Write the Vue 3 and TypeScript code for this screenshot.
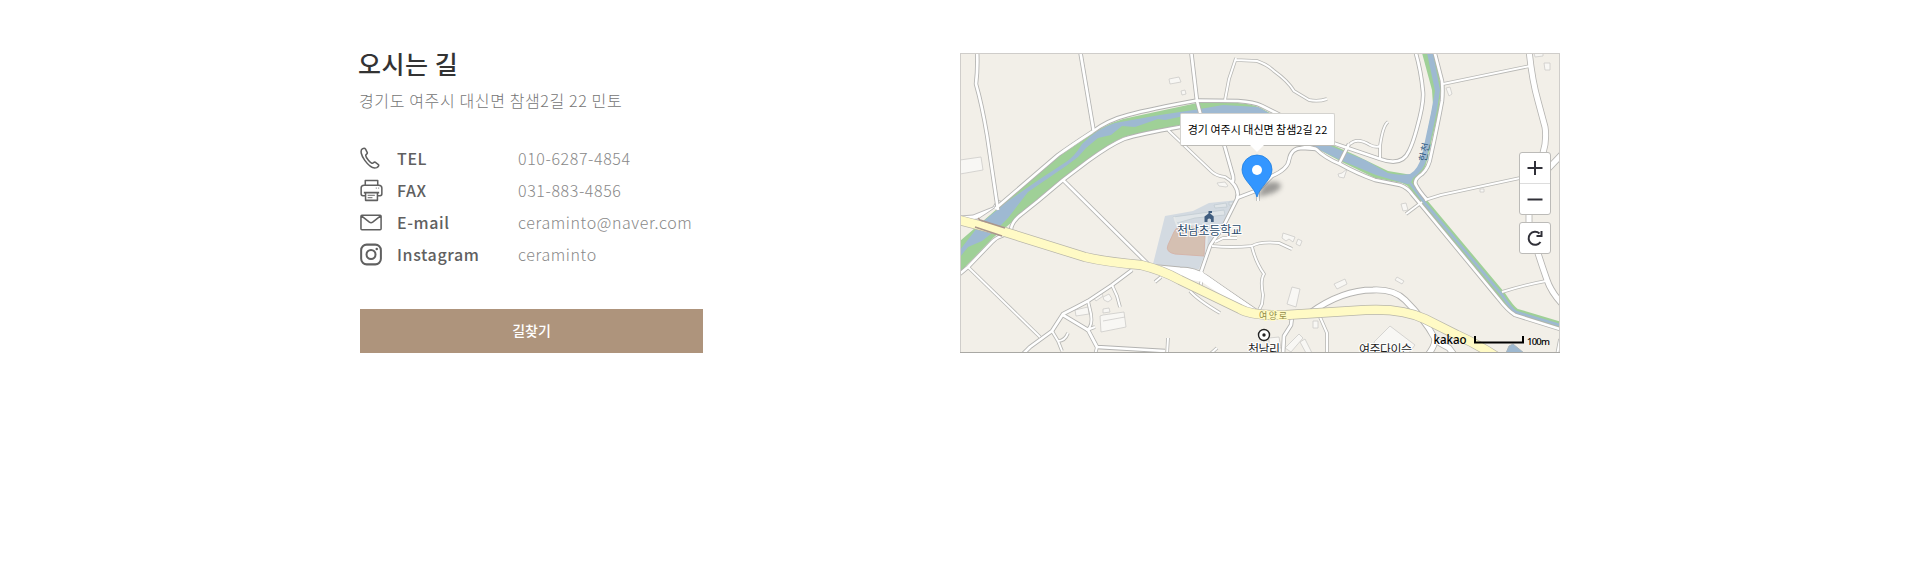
<script setup lang="ts">
interface Contact {
  icon: 'phone' | 'printer' | 'mail' | 'instagram'
  label: string
  value: string
}

const contacts: Contact[] = [
  { icon: 'phone', label: 'TEL', value: '010-6287-4854' },
  { icon: 'printer', label: 'FAX', value: '031-883-4856' },
  { icon: 'mail', label: 'E-mail', value: 'ceraminto@naver.com' },
  { icon: 'instagram', label: 'Instagram', value: 'ceraminto' },
]

const mediumRoads: string[] = [
  'M977 50 Q978 68 976 84 Q982 105 987 135 L998 210',
  'M1080 50 L1093.500 130',
  'M995 209 L1058 155 Q1072 145 1092 132 Q1108 120 1128 115 Q1150 109 1197 100.500 L1238 101 Q1254 102 1262 106 L1278 114 L1330 142 L1380 159 Q1402 167 1409 151 Q1413 143 1417 128 Q1424 103 1423 92 Q1421 70 1415 50',
  'M956 277 L968 267 L992 242 Q997 237 1004 235 M1011 229 Q1012 221 1023 213 L1038 201 L1063 180 L1088 161 Q1110 145 1124 139 Q1139 134 1180 127 L1240 124 L1302 145 L1316 149 Q1325 158 1340 164 Q1356 173 1375 180 L1400 185 Q1408 188 1412 194 L1422 206 L1498 298 Q1508 311 1515 315 L1563 330',
  'M1434 50 L1442 81 Q1443 91 1442 101 Q1438 123 1431 155 Q1429 168 1422 174 Q1413 180 1416 185 Q1419 191 1427 200',
  'M1191 50 L1197 101 L1201 116',
  'M1063 180 L1148 264',
  'M1238 197 L1222 229 Q1212 242 1210 246 L1201 272',
  'M1222 137 L1233 176 Q1234 184 1231 181 Q1240 190 1237 199',
  'M1237 198 L1258 190 L1272 176 Q1288 169 1289 160 Q1291 148 1302 148 L1316 149',
  'M1339 164 L1349 144',
  'M1022 355 L1030 347 L1052 331 L1063 314 Q1077 307 1088 301 L1112 285 L1132 270',
  'M1063 315 L1088 330 L1097 347 L1165 351',
  'M1292 317 L1291 325 L1284 336 L1283 355',
]

const minorRoads: string[] = [
  'M1443 84 L1530 66',
  'M1425 200 L1441 195 L1520 178',
  'M1502 292 Q1524 285 1546 281',
  'M1406 214 L1422 202',
  'M968 267 L1040 337',
  'M1168 130 L1211 171 Q1216 176 1225 177 L1232 182',
  'M1225 100 L1229 79 L1236 58 M1236 60 L1257 61 Q1268 65 1274 71 Q1288 81 1294 91 L1309 100 Q1318 102 1327 99',
  'M1258 190 V201',
  'M1212 246 Q1231 248 1252 246 Q1260 241 1279 243 L1292 249',
  'M1252 247 Q1256 263 1264 274 Q1260 280 1263 295 L1262 304 L1258 312',
  'M1215 242 L1223 238 H1237',
  'M1350 144 Q1357 137 1370 145 Q1376 148 1380 146 M1380 160 V146 Q1383 125 1388 122',
  'M1112 285 L1117 296 L1120 307',
  'M1088 301 L1091 314 Q1093 326 1087 330 L1095 327',
  'M1052 331 L1058 341 L1062 351 M1058 341 Q1065 341 1068 333',
  'M1097 347 L1095 355',
  'M1190 291 Q1198 300 1220 313 M1202 278 L1200 289',
  'M1320 317 L1327 333 L1327 355',
  'M1168 338 L1167 355',
  'M1217 348 L1208 356',
  'M1155 282 L1161 277',
  'M1560 339 L1557 355',
]

const wideRoads: string[] = [
  'M1529 50 Q1532 80 1538 101 L1545 127 Q1547 140 1543 153',
  'M1529 213 L1529 222 Q1535 246 1547 280 Q1551 292 1563 305',
  'M1563 153 L1547 170',
  'M1148 267 L1180 270 Q1195 270 1206 278 Q1220 288 1257 313',
  'M1310 313 Q1342 290 1373 290 Q1394 289 1405 300 Q1425 320 1434 337 Q1437 343 1428 355',
  'M1438 342 L1449 348 L1455 356',
]

const buildings: string[] = [
  'M960 160 L981 157 L983 170 L960 174Z',
  'M1169 79 L1179 77 L1181 82 L1170 84Z',
  'M1181 91 L1185 90 L1186 94 L1182 95Z',
  'M1534 53 L1543 53 L1543 56 L1535 57Z',
  'M1544 63 L1550 63 L1550 70 L1545 70Z',
  'M1446 88 L1450 87 L1452 94 L1449 96Z',
  'M1480 189 H1484 V192 H1480Z',
  'M1217 183 L1225 182 L1228 186 L1226 187 L1219 186Z',
  'M1338 174 L1342 173 L1347 169 L1344 178 L1339 177Z',
  'M1401 204 L1406 203 L1408 210 L1403 211Z',
  'M1397 277 L1404 281 L1402 284 L1395 280Z',
  'M1075 310 L1088 307 L1089 314 L1076 316Z',
  'M1093 297 L1101 292 L1103 296 L1096 301Z',
  'M1103 297 L1109 294 L1112 299 L1108 302 L1104 300Z',
  'M1103 309 L1109 308 L1110 312 L1103 313Z',
  'M1103 315 L1124 312 L1126 327 L1101 332 L1100 316 L1103 315Z',
  'M1103 321 L1125 317',
  'M1283 233 L1295 237 L1293 242 L1289 239 L1286 241 L1282 238Z',
  'M1298 239 L1302 241 L1300 246 L1296 244Z',
  'M1292 287 L1300 289 L1296 307 L1287 304Z',
  'M1334 284 L1345 279 L1347 284 L1337 289Z',
  'M1313 321 H1318 V328 H1313Z',
  'M1285 348 L1299 334 L1303 338 L1291 352Z',
  'M1300 342 L1305 339 L1312 353 L1306 353Z',
  'M1269 338 L1279 337 L1281 348 L1269 347Z',
  'M1390 326 L1415 345 L1408 354 L1378 354 L1374 342Z',
]
</script>

<template>
  <main class="directions">
    <section class="info">
      <h2>오시는 길</h2>
      <p class="address">경기도 여주시 대신면 참샘2길 22 민토</p>
      <ul class="contacts">
        <li v-for="contact in contacts" :key="contact.label">
          <svg class="icon" viewBox="0 0 24 24" aria-hidden="true">
            <path v-if="contact.icon === 'phone'" d="M2.400 2 C.1 3.500 1 8.500 5 14 C9 19.500 14 23 17.500 21.500 C19.200 20.700 20 19.400 19.200 18.300 L15.800 15.900 C14.700 15.300 14.200 16.400 13.300 17 C11.500 17.700 5.500 10.500 6 8.500 C6.500 7.400 8 7.200 7.600 5.800 L5.800 2.200 C5 1 3.500 1.300 2.400 2Z" />
            <g v-else-if="contact.icon === 'printer'">
              <path d="M5.500 6.300 V1.500 H18.500 V6.300 M5.500 17.500 H3 Q1.200 17.500 1.200 15.500 V9.500 Q1.200 6.500 4.300 6.500 H19.500 Q22.800 6.500 22.800 9.500 V15.500 Q22.800 17.500 21 17.500 H18.500 M4 14.200 H20 M5.800 14.200 V22.300 H18.200 V14.200" />
              <path class="fine" d="M8 17 H15.500 M8 19.500 H13 M16.500 9.500 H17.500 M19 9.500 H20" />
            </g>
            <path v-else-if="contact.icon === 'mail'" d="M2 4.500 H21 Q22 4.500 22 5.500 V18.500 Q22 19.500 21 19.500 H2 Q1 19.500 1 18.500 V5.500 Q1 4.500 2 4.500Z M1.500 5 L9.800 11.700 Q11.500 13 13.200 11.700 L21.500 5" />
            <g v-else class="strong">
              <rect x="1.200" y="1.700" width="20.600" height="20.600" rx="5.800" />
              <circle cx="11.500" cy="12" r="4.700" />
              <circle class="dot" cx="17.500" cy="6.300" r="1.300" />
            </g>
          </svg>
          <strong>{{ contact.label }}</strong>
          <span>{{ contact.value }}</span>
        </li>
      </ul>
      <button type="button">길찾기</button>
    </section>

    <section class="map">
      <svg class="terrain" viewBox="960 53 600 300" aria-label="지도">
        <defs>
          <filter id="pin-blur" x="-30%" y="-30%" width="160%" height="160%">
            <feGaussianBlur stdDeviation="2.500" />
          </filter>
        </defs>
        <rect x="960" y="53" width="600" height="300" fill="#f2efe8" />

        <path class="building" v-for="d in buildings" :key="d" :d="d" />

        <path fill="#d3dae1" d="M1165 216 L1193 211 L1209 203 L1238 200 L1222 229 L1210 245 L1203 270 L1153 264Z" />
        <path fill="#e0e5e8" stroke="#c2cbd2" stroke-width=".8" d="M1173 217 L1224 210 L1225 215 L1195 218 L1177 223Z M1214 205 L1226 203 L1227 207 L1215 208Z M1229 202 H1234 V205 H1229Z" />
        <path fill="#d5c0b2" stroke="#d5b5aa" d="M1174 232 Q1176 227 1180 227 L1192 227 L1205 234 L1204 256 L1175 254 Q1165 252 1168 245Z" />
        <path fill="none" stroke="#e5e8e8" stroke-width="2" d="M1174 217 L1177 225 L1194 224 L1207 234 L1206 254 L1200 269" />

        <path class="green" d="M960 241 L1005 202 L1058 157 L1092 134 Q1113 120 1132 117 L1197 103 L1238 103 Q1257 104 1268 112 L1328 143 L1355 155 L1388 171 L1412 175 Q1422 165 1425 145 L1433 105 L1432 90 L1422 53 L1435 53 L1441 87 L1439 110 L1427 160 Q1425 172 1416 178 L1412 188 L1402 183 L1375 178 L1340 161 L1316 148 L1255 125 L1180 125 L1127 136 Q1108 142 1063 179 L1035 202 L1017 218 L994 237 L960 272Z" />
        <path class="water" d="M960 250 L980 224 L1008 201 L1040 179 L1066 162 Q1075 156 1082 144 Q1098 128 1115 123 L1160 115 L1200 109 L1223 105 L1258 107 L1300 130 L1328 145 L1365 160 L1388 173 Q1400 176 1410 174 Q1418 170 1422 155 L1431 113 L1435 91 L1427 53 L1433 53 L1440 90 L1437 110 L1427 157 Q1424 171 1413 178 L1410 185 L1376 175 L1340 160 L1316 148 L1255 120 L1200 119 L1184 116 L1165 120 L1158 119 L1135 127 L1122 126 L1111 135 L1098 138 L1086 148 L1078 157 L1066 166 L1028 192 L1008 218 L997 229 L982 241 L968 247 L960 257Z" />
        <path class="stream-bank" d="M1410 183 L1424 202 L1502 295 Q1511 309 1516 312 L1563 326" />
        <path class="stream" d="M1410 183 L1424 202 L1502 295 Q1511 309 1516 312 L1563 326" />
        <path fill="#9db8d0" stroke="#a9b5bc" d="M1506 353 L1509 346 L1513 344 L1524 353Z" />
        <path fill="#fff" stroke="#aaa" stroke-width=".8" d="M960 216 L973 215 L993 207 L997 200 L1003 202 L987 213 L978 219 L960 221Z" />

        <path class="wide-case" v-for="d in wideRoads" :key="`c${d}`" :d="d" />
        <path class="medium-case" v-for="d in mediumRoads" :key="`c${d}`" :d="d" />
        <path class="minor-case" v-for="d in minorRoads" :key="`c${d}`" :d="d" />
        <path class="wide" v-for="d in wideRoads" :key="d" :d="d" />
        <path class="medium" v-for="d in mediumRoads" :key="d" :d="d" />
        <path class="minor" v-for="d in minorRoads" :key="d" :d="d" />
        <path fill="#fff" d="M1150 266 L1188 270 L1203 272 L1203 282 L1180 278Z M1202 272 L1258 311 L1250 314 L1199 280Z" />

        <path class="highway-case" d="M955 219 L1005 232 L1085 257 Q1106 262 1141 265 Q1162 270 1180 280 L1240 309 Q1252 316 1286 315 L1365 310 Q1402 308 1425 319 L1457 335 Q1479 345 1500 359" />
        <path class="highway" d="M955 219 L1005 232 L1085 257 Q1106 262 1141 265 Q1162 270 1180 280 L1240 309 Q1252 316 1286 315 L1365 310 Q1402 308 1425 319 L1457 335 Q1479 345 1500 359" />
        <path fill="none" stroke="#a9968b" stroke-width="1.500" d="M978 218 L980 220 L1005 228 M975 227 L1002 236" />

        <g class="place">
          <text x="1177" y="235" textLength="65" class="school">천남초등학교</text>
          <text x="1248" y="354" textLength="32">천남리</text>
          <text x="1359" y="354" textLength="53">여주다이슨</text>
          <text x="1259" y="319" textLength="28" class="road-name">여양로</text>
          <text transform="translate(1426 162) rotate(-78)" textLength="19" class="river-name">한천</text>
        </g>
        <path fill="#405d7f" d="M1204.500 222 V216.500 L1208.500 213.500 V211 H1212 V213 H1209.700 L1213.700 216.500 V222 H1211 V219.500 Q1209.200 217.500 1207.500 219.500 V222Z" />
        <circle cx="1264" cy="335" r="5.500" fill="#fff" stroke="#222" stroke-width="1.400" />
        <circle cx="1264" cy="335" r="1.700" fill="#222" />

        <path fill="#555" opacity=".55" filter="url(#pin-blur)" d="M1257 197 L1264 184 Q1276 179 1281 185 Q1281 193 1257 197Z" />
        <path fill="#3396ff" stroke="#207fe0" stroke-width=".8" d="M1257 197 C1254 186 1242 180 1242 169.500 A15 14.500 0 0 1 1272 169.500 C1272 180 1260 186 1257 197Z" />
        <circle cx="1257" cy="170" r="5" fill="#fff" />

        <text x="1433.500" y="343.500" textLength="33" lengthAdjust="spacingAndGlyphs" class="kakao">kakao</text>
        <path fill="none" stroke="#000" stroke-width="2" d="M1475 336 V342.500 H1523 V336" />
        <text x="1527" y="345" textLength="23" class="scale">100m</text>
        <rect x="960.500" y="53.500" width="599" height="299" fill="none" stroke="#cfcdca" />
        <path stroke="#a9a8a4" d="M960 352.500 H1560" />
      </svg>

      <div class="tooltip">경기 여주시 대신면 참샘2길 22</div>
      <div class="controls">
        <div class="zoom-controls">
          <button type="button" aria-label="확대"><svg viewBox="0 0 30 30"><path d="M7.500 15 H22.500 M15 8 V22" /></svg></button>
          <button type="button" aria-label="축소"><svg viewBox="0 0 30 30"><path d="M7.500 15.500 H22.500" /></svg></button>
        </div>
        <button type="button" class="refresh" aria-label="새로고침"><svg viewBox="0 0 30 30"><path d="M20.500 19 A6.500 6.500 0 1 1 19.500 10.500 M21.500 8 V13 H16.500" /></svg></button>
      </div>
    </section>
  </main>
</template>

<style>
body {
  margin: 0;
  background: #fff;
}
</style>

<style scoped>
.directions {
  box-sizing: border-box;
  width: 1920px;
  height: 563px;
  padding: 53px 360px 0;
  display: grid;
  grid-template-columns: 600px 600px;
  align-items: start;
  font-family: "Noto Sans CJK KR", sans-serif;
  color: #606060;
}
.info {
  height: 300px;
}
h2 {
  margin: -4px 0 0 -2px;
  height: 34px;
  line-height: 29px;
  font-size: 25px;
  font-weight: 500;
  letter-spacing: .5px;
  color: #333;
}
.address {
  margin: 5px 0 0 -1px;
  height: 25px;
  line-height: 25px;
  font-size: 16px;
  font-weight: 300;
  letter-spacing: .63px;
  color: #757575;
}
.contacts {
  list-style: none;
  margin: 29px 0 0;
  padding: 0;
}
.contacts li {
  display: grid;
  grid-template-columns: 37px 121px 1fr;
  align-items: center;
  height: 32px;
  line-height: 32px;
  font-size: 16px;
}
.contacts strong {
  font-weight: 500;
  letter-spacing: .6px;
}
.contacts span {
  font-weight: 300;
  letter-spacing: .6px;
  color: #888;
}
.icon {
  width: 23px;
  height: 23px;
  fill: none;
  stroke: #606060;
  stroke-width: 1.6;
  stroke-linejoin: round;
}
.icon .fine {
  stroke-width: 1;
}
.icon .strong {
  stroke-width: 2.1;
}
.icon .dot {
  fill: #606060;
  stroke: none;
}
.info button {
  display: block;
  width: 343px;
  height: 44px;
  margin-top: 39px;
  padding: 0 0 1px;
  border: 0;
  background: #ae947c;
  color: #fff;
  font: 500 14px/43px "Noto Sans CJK KR", sans-serif;
}
.map {
  position: relative;
  width: 600px;
  height: 300px;
}
.terrain {
  display: block;
  width: 600px;
  height: 300px;
  overflow: hidden;
}
.building {
  fill: #f8f7f4;
  stroke: #cdccc9;
  stroke-width: .8;
}
.green { fill: #9fd097; }
.water { fill: #9eb9d2; }
.stream-bank,
.stream,
.wide,
.wide-case,
.medium,
.medium-case,
.minor,
.minor-case,
.highway,
.highway-case {
  fill: none;
  stroke-linejoin: round;
}
.stream-bank { stroke: #9fd097; stroke-width: 7; }
.stream { stroke: #9eb9d2; stroke-width: 2.8; }
.wide-case { stroke: #b4b3b0; stroke-width: 6.8; }
.wide { stroke: #fff; stroke-width: 5.2; }
.medium-case { stroke: #b3b3b1; stroke-width: 4.4; }
.medium { stroke: #fff; stroke-width: 2.7; }
.minor-case { stroke: #b8b8b5; stroke-width: 3.6; }
.minor { stroke: #fff; stroke-width: 2; }
.highway-case { stroke: #b7b5a9; stroke-width: 10; }
.highway { stroke: #fffac5; stroke-width: 8.6; }
.place text {
  font-size: 12px;
  font-weight: 400;
  fill: #1c1c1c;
  stroke: #fff;
  stroke-width: 2px;
  paint-order: stroke;
}
.place .school { fill: #294969; }
.place .road-name {
  font-size: 9px;
  fill: #918c48;
  stroke: #fffac5;
}
.place .river-name {
  font-size: 10px;
  fill: #345b82;
  stroke: none;
}
.kakao {
  font: 500 13px "Noto Sans", sans-serif;
  fill: #000;
}
.scale {
  font: 500 9.5px "Noto Sans", sans-serif;
  fill: #000;
}
.tooltip {
  position: absolute;
  left: 220px;
  top: 60px;
  box-sizing: border-box;
  width: 155px;
  height: 33px;
  border: 1px solid #d4d3cf;
  border-bottom-color: #bcbbb7;
  border-radius: 2px;
  background: #fff;
  color: #000;
  text-align: center;
  font-size: 11px;
  line-height: 30px;
  letter-spacing: 0;
  white-space: nowrap;
}
.tooltip::after {
  content: "";
  position: absolute;
  top: 31px;
  left: 69px;
  border: 7px solid transparent;
  border-top-color: #fff;
  border-bottom: 0;
}
.controls {
  position: absolute;
  right: 9px;
  top: 99px;
  display: grid;
  gap: 7px;
}
.zoom-controls,
.refresh {
  box-sizing: border-box;
  width: 32px;
  border: 1px solid #bcbbb8;
  border-radius: 3px;
  background: #fff;
}
.zoom-controls {
  height: 63px;
}
.controls button {
  display: block;
  width: 32px;
  height: 32px;
  padding: 0;
}
.controls .zoom-controls button {
  box-sizing: border-box;
  width: 30px;
  height: 30px;
  border: 0;
  background: transparent;
}
.controls .zoom-controls button + button {
  height: 31px;
  border-top: 1px solid #ddd;
}
.controls svg {
  display: block;
  width: 30px;
  height: 30px;
  fill: none;
  stroke: #303038;
  stroke-width: 2;
}
</style>
